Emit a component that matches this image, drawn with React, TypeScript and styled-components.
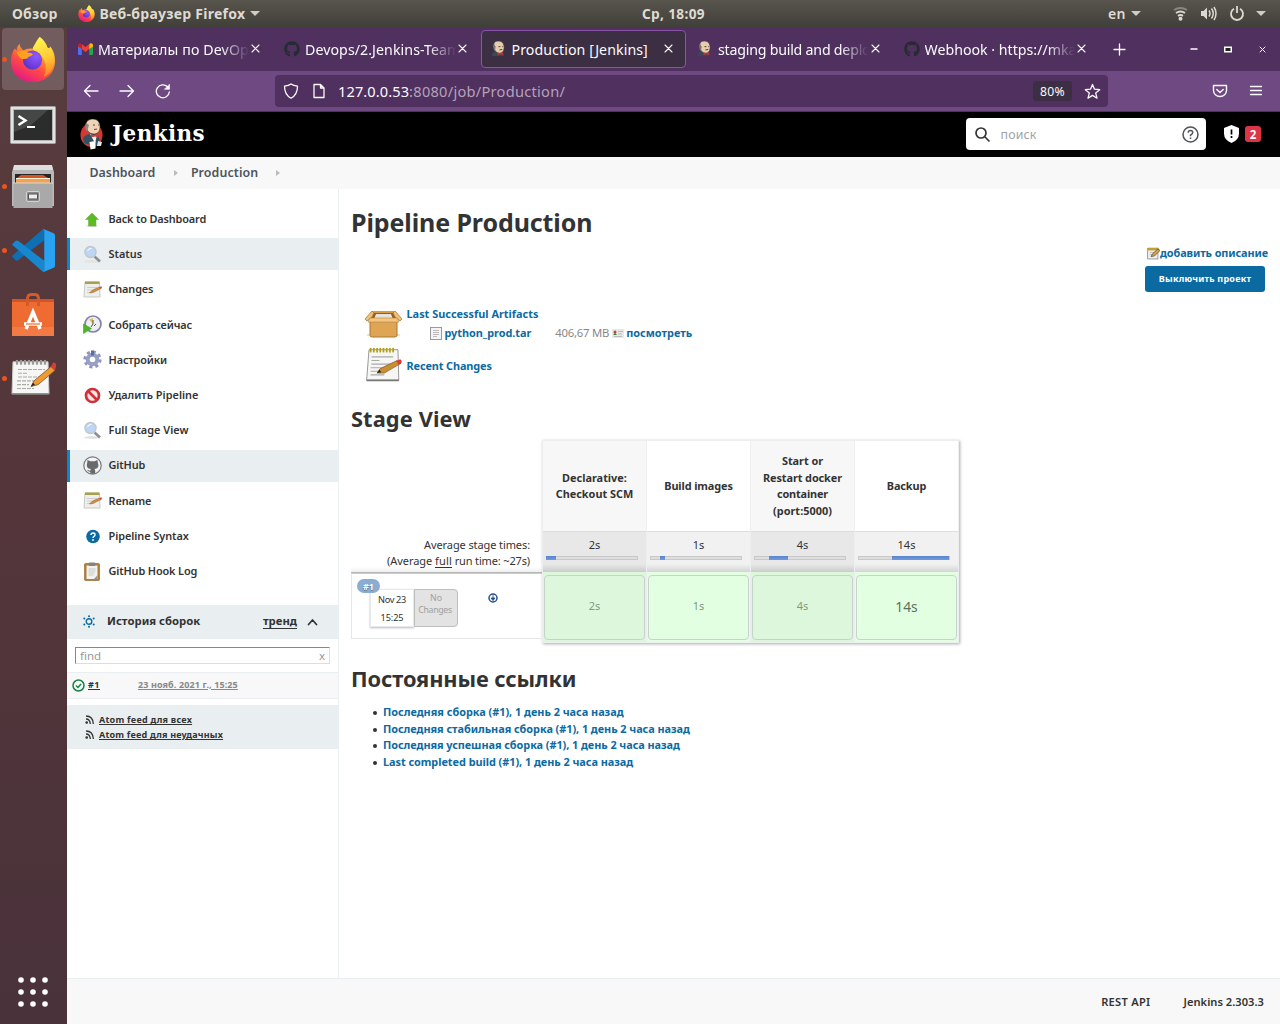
import React from 'react';
import styled, { createGlobalStyle, css } from 'styled-components';
import { FaGithub } from 'react-icons/fa';

/* letter spacing, in px, by label */
const tracking: Record<string, number> = {
  'Обзор': 0.22, 'Веб-браузер Firefox': 0.28, 'Ср, 18:09': 0.35, 'en': 0.44,
  'Материалы по DevOp': 0.12, 'Devops/2.Jenkins-Team': 0.06, 'Production [Jenkins]': 0.07, 'staging build and deplo': -0.22,
  '127.0.0.53': 0.09, ':8080/job/Production/': 0.27, '80%': 0.31, 'Jenkins': 0.39, 'поиск': 0.15, 'Production': 0.1,
  'Back to Dashboard': -0.15, 'Changes': -0.14, 'Собрать сейчас': -0.13, 'Настройки': -0.11, 'Удалить Pipeline': 0.02, 'Full Stage View': 0.02,
  'GitHub': -0.1, 'Rename': -0.12, 'GitHub Hook Log': -0.13, 'Pipeline Syntax': -0.05,
  'История сборок': -0.3, '#1': 0.5, '23 нояб. 2021 г., 15:25': 0.11, 'Atom feed для всех': 0.24, 'Atom feed для неудачных': 0.19,
  'Pipeline Production': -0.1, 'добавить описание': -0.11, 'Выключить проект': 0.22, 'Last Successful Artifacts': 0.01, 'python_prod.tar': -0.05, '406,67 MB': -0.21,
  'Recent Changes': -0.12, 'Stage View': 0.11,
  'Average stage times:': -0.1, '(Average ': -0.05, 'full': 0.18, ' run time: ~27s)': -0.15,
  'Build images': -0.11, 'Start or': -0.04, 'Restart docker': -0.09, 'container': -0.16, '(port:5000)': 0.03, 'Backup': -0.1,
  'Nov 23': -0.32, '15:25': -0.1, 'Changes ': -0.34,
  'Постоянные ссылки': -0.12, 'Последняя сборка (#1), 1 день 2 часа назад': -0.02, 'Последняя стабильная сборка (#1), 1 день 2 часа назад': -0.05,
  'Последняя успешная сборка (#1), 1 день 2 часа назад': -0.06, 'Last completed build (#1), 1 день 2 часа назад': -0.04,
  'REST API': 0.28, 'Jenkins 2.303.3': 0.04,
};

const Tracked = styled.span<{ $ls: number }>`
  white-space: pre;
  letter-spacing: ${p => p.$ls}px;
`;
const T = ({ children }: { children: string }) => <Tracked $ls={tracking[children] ?? 0}>{children}</Tracked>;

const Global = createGlobalStyle`
  * { box-sizing: border-box; }
  body { margin: 0; overflow: hidden; background: #fff; }
  svg { display: block; flex: none; }
  h1, h2, ul { margin: 0; padding: 0; }
`;

const Screen = styled.div`
  width: 1280px; height: 1024px; display: flex; flex-direction: column;
  font-family: 'Noto Sans', sans-serif; font-size: 11px; color: #333;
`;
const TopBar = styled.header`
  height: 27px; flex: none; display: grid; grid-template-columns: 642px 1fr auto; align-items: center;
  background: linear-gradient(#58554d, #403f39); color: #dfdbd2; font-size: 14px; font-weight: 700;
`;
const TopLeft = styled.div`display: flex; align-items: center; padding-left: 12px;`;
const AppMenu = styled.div`display: flex; align-items: center; gap: 5px; margin-left: 20px;`;
const TopRight = styled.div`display: flex; align-items: center; padding-right: 14px; font-weight: 600;`;
const Clock = styled.div`font-size: 13.6px; margin-top: -1px;`;
const Gap = styled.i<{ $w: number }>`width: ${p => p.$w}px; flex: none;`;
const Caret = styled.i`
  width: 0; height: 0; border: 5px solid transparent; border-top-color: #d0ccc3; border-bottom: 0;
`;

const Desktop = styled.div`display: flex; flex: 1; min-height: 0;`;
const Dock = styled.nav`
  width: 67px; flex: none; display: flex; flex-direction: column; align-items: flex-start;
  background: linear-gradient(#573c3e, #54363a 45%, #49323a);
`;
const DockItem = styled.div<{ $h: number; $running?: boolean }>`
  height: ${p => p.$h}px; width: 67px; display: flex; align-items: center; padding-left: 2px;
  &::before { content: ''; width: 5px; height: 5px; border-radius: 50%; z-index: 1; background: ${p => (p.$running ? '#e95420' : 'transparent')}; }
`;
const DockTile = styled.div<{ $active?: boolean }>`
  width: 62px; height: 62px; margin-left: -5px; border-radius: 4px; display: grid; place-items: center;
  background: ${p => (p.$active ? '#735c5e' : 'transparent')};
`;
const DockApps = styled.div`margin: auto 0 16px 17px;`;

const Browser = styled.div`flex: 1; min-width: 0; display: flex; flex-direction: column; background: #fff;`;
const TabStrip = styled.div`
  height: 44px; flex: none; display: flex; align-items: center; background: #50305f; color: #fbfbfe; font-size: 14.2px;
  padding-left: 1px;
`;
const Tab = styled.div<{ $active?: boolean; $gap?: number }>`
  width: 205px; margin-right: 1.5px; height: 38px; margin-top: -1px; padding: 0 12px 0 8.5px; display: flex; align-items: center; gap: ${p => p.$gap ?? 5}px;
  border: 1px solid ${p => (p.$active ? '#8a55a6' : 'transparent')}; border-radius: 4px;
  background: ${p => (p.$active ? '#3c2f43' : 'transparent')};
`;
const TabTitle = styled.div<{ $fade?: boolean }>`
  flex: 1; min-width: 0; overflow: hidden; display: flex; padding-top: 2px; margin-right: -3px;
  ${p => p.$fade && css`mask-image: linear-gradient(90deg, #000 calc(100% - 28px), transparent);`}
`;
const WindowButtons = styled.div`display: flex; align-items: center; gap: 26.5px; margin-left: auto; padding-right: 14.5px;`;
const NavBar = styled.div`
  height: 41px; flex: none; display: flex; align-items: center; background: #6f4a82; border-bottom: 1px solid #50305f; color: #fbfbfe;
  padding-left: 16px;
`;
const UrlBox = styled.div`
  width: 833px; height: 32px; border-radius: 4px; background: #50305f; display: flex; align-items: center; font-size: 14.6px;
  padding: 0 7px 0 8px;
`;
const UrlRest = styled.span`color: #b3a3bb;`;
const Zoom = styled.div`
  margin-left: auto; width: 39px; height: 20px; border-radius: 3px; background: #3c2f43; display: grid; place-items: center; font-size: 12.2px;
`;

const JHeader = styled.header`
  height: 45px; flex: none; background: #000; display: flex; align-items: center; padding: 0 19px 1px 13px; color: #fff;
`;
const Wordmark = styled.div`font: 700 21.5px/44px 'DejaVu Serif', serif; margin-left: 7px;`;
const Search = styled.div`
  margin-left: auto; width: 240px; height: 32px; border-radius: 4px; background: #fff; display: flex; align-items: center;
  padding: 0 7px 0 9px; font-size: 12.4px; color: #a0a4a8; justify-content: space-between;
`;
const SearchHint = styled.span`flex: 1; margin-left: 10.5px;`;
const Alert = styled.span`
  width: 16px; height: 16px; border-radius: 3px; background: #dc3545; display: grid; place-items: center; font-weight: 700; font-size: 11.5px; margin-left: 6px;
`;
const Crumbs = styled.div`
  height: 32px; flex: none; background: #f8f8f8; display: flex; align-items: center; padding: 0 0 2px 22.5px; font-size: 12.4px; font-weight: 600; color: #4d545d;
`;
const CrumbArrow = styled.i<{ $l: number; $r: number }>`
  border: 3px solid transparent; border-left: 4px solid #bbb; border-right: 0; margin: 2px ${p => p.$r}px 0 ${p => p.$l}px;
`;

const Body = styled.div`flex: 1; min-height: 0; display: flex;`;
const Side = styled.aside`width: 272px; flex: none; border-right: 1px solid #eaeff2;`;
const Tasks = styled.div`height: 416px; padding-top: 14px; display: flex; flex-direction: column; gap: 3.24px;`;
const Task = styled.a<{ $active?: boolean }>`
  height: 32px; flex: none; display: flex; align-items: center; gap: 6.5px; padding-left: 13px; font-size: 10.9px; font-weight: 600; color: #333;
  border-left: 3px solid ${p => (p.$active ? '#0b86d0' : 'transparent')}; background: ${p => (p.$active ? '#e9eef1' : 'transparent')};
  span { padding-bottom: 1.3px; }
`;
const HistoryHead = styled.div`
  height: 34px; background: #e9eef1; display: flex; align-items: center; padding: 0 20px 1px 16px; font-size: 11.3px; font-weight: 700;
  span { position: relative; top: -1px; }
`;
const HistoryTitle = styled.span`margin: 0 auto 0 12px;`;
const Trend = styled.a`text-decoration: underline; text-underline-offset: 2px; margin-right: 10px;`;
const Find = styled.div`
  margin: 8px 8px 8px; height: 17px; border: 1px solid #ddd; border-top-color: #888; border-left-color: #888; display: flex; align-items: center; justify-content: space-between;
  padding: 0 4px; font-size: 11.5px; color: #999;
`;
const BuildRow = styled.div`
  height: 27px; background: #f8f8f8; border: solid #e9eef1; border-width: 1px 0; display: flex; align-items: center; padding: 0 0 2px 4.5px;
  font-size: 9px; font-weight: 700;
  svg { margin-top: 1px; }
`;
const BuildNo = styled.a`text-decoration: underline; text-underline-offset: 1px; margin: -1px 38px 0 3.5px; color: #333;`;
const BuildDate = styled.a`text-decoration: underline; color: #888; text-underline-offset: 1px; margin-top: -1px;`;
const Feeds = styled.div`margin-top: 6px; height: 44px; background: #e9eef1; padding: 7px 18px; font-size: 9px; font-weight: 700;`;
const Feed = styled.div`height: 15px; display: flex; align-items: center; gap: 5px; a { text-decoration: underline; text-underline-offset: 1px; }`;

const Main = styled.main`flex: 1; min-width: 0; padding: 15px 12px 0; display: flex; flex-direction: column;`;
const H1 = styled.h1`font-size: 25px; line-height: 36px; font-weight: 700;`;
const H2 = styled.h2`font-size: 21.8px; line-height: 30px; font-weight: 700;`;
const Actions = styled.div`margin-top: 5px; display: flex; flex-direction: column; align-items: flex-end; gap: 5px;`;
const Link = styled.a<{ $drop?: number }>`
  color: #0b6aa2; font-weight: 700; font-size: 10.9px; line-height: 16px; display: inline-flex; align-items: center; padding-top: ${p => p.$drop ?? 0}px;
`;
const Disable = styled.button`
  width: 120px; height: 26px; margin-right: 3px; border: 0; border-radius: 3px; background: #0b6aa2; color: #fff; padding: 0 0 1px; font: 700 9px 'Noto Sans', sans-serif;
`;
const Artifacts = styled.div`margin: 14px 0 21px; padding-left: 14px; display: flex; flex-direction: column; gap: 5px;`;
const Artifact = styled.div`display: flex; gap: 4.5px; height: 36px; align-items: center;`;
const ArtifactLines = styled.div`display: flex; flex-direction: column; gap: 3px; align-self: flex-start;`;
const FileRow = styled.div`display: flex; align-items: center; padding-left: 23px; height: 16px;`;
const FileSize = styled.span`color: #888; font-size: 11.3px; margin: -1px 0 0 24px;`;

const Stage = styled.div`margin: 6px 0 21px; display: flex; height: 203px;`;
const StageLeft = styled.div`width: 191px; display: flex; flex-direction: column;`;
const AvgLabel = styled.div`
  height: 133px; display: flex; flex-direction: column; justify-content: flex-end; align-items: flex-end; padding: 0 12px 3px 0; font-size: 11px; line-height: 16px;
  background: linear-gradient(to top, #eee, transparent 5px);
  border-bottom: 1px solid #b8b8b8;
  u { text-underline-offset: 2px; }
`;
const RunInfo = styled.div`
  height: 66px; border: 1px solid #e4e6e8; border-top-color: #ccc; border-right: 0; display: flex; padding: 15px 0 0 18px; position: relative;
  svg { margin-top: 4px; }
`;
const Badge = styled.span`
  position: absolute; left: 5px; top: 5px; width: 23px; height: 14px; border-radius: 7px; background: #8aadd1; color: #fff; font-size: 9px; font-weight: 700; display: grid; place-items: center; text-shadow: 0 1px 1px #567;
`;
const RunDate = styled.div`
  width: 44px; height: 38px; border: 1px solid #e4eaee; box-shadow: 0 1px 2px #bbb; display: flex; flex-direction: column; align-items: center; font-size: 9.2px; line-height: 18px; padding-top: 1px; background: #fff;
`;
const NoChanges = styled.div`
  width: 44px; height: 38px; border: solid #bdbdbd; border-width: 1.500px 1px 1px 1px; border-radius: 0 4px 4px 0; background: #e3e3e3; color: #a0a0a0; font-size: 8.8px; line-height: 12px; padding-top: 2px;
  display: flex; flex-direction: column; align-items: center; margin-right: 30px;
`;
const StageGrid = styled.div`width: 417px; display: grid; grid-template-columns: 104px 104px 104px 103px; box-shadow: 1px 1px 3px #aaa; border: 1px solid #eceef0;`;
const StageCol = styled.div<{ $odd: boolean }>`
  display: flex; flex-direction: column; border-right: 1px solid #eceef0; background: ${p => (p.$odd ? '#f7f7f7' : '#fff')};
  &:last-child { border-right: 0; }
`;
const StageName = styled.div`
  height: 90px; display: flex; flex-direction: column; align-items: center; justify-content: center; font-size: 10.9px; font-weight: 700; line-height: 16.5px;
`;
const Avg = styled.div<{ $odd: boolean }>`
  height: 41px; border-top: 1px solid #ddd; display: flex; flex-direction: column; align-items: center; font-size: 11px; line-height: 16px; padding-top: 5px; gap: 3px;
  background: linear-gradient(to top, rgba(0,0,0,.12), transparent 8px), ${p => (p.$odd ? '#e8e8e8' : '#f1f1f1')};
`;
const Meter = styled.div`width: 92px; height: 4px; margin-right: 5px; border: 1px solid #c8c8c8; background: #dedede; display: flex;`;
const MeterFill = styled.i<{ $from: number; $w: number }>`height: 4px; margin: -1px 0 0 ${p => p.$from - 1}px; width: ${p => p.$w}px; background: linear-gradient(#5a85cc, #6f9bdf);`;
const CellWrap = styled.div<{ $odd: boolean }>`flex: 1; padding: 3px 1px 2px; background: ${p => (p.$odd ? '#ddf7dd' : '#e2ffe2')};`;
const Cell = styled.div<{ $last?: boolean }>`
  height: 100%; border: 1px solid #c6d3cb; border-radius: 4px; display: grid; place-items: center; padding-bottom: ${p => (p.$last ? 2 : 4)}px;
  color: ${p => (p.$last ? '#5d705d' : '#849784')}; font-size: ${p => (p.$last ? 13.8 : 11)}px;
`;
const Links = styled.ul`margin: 10px 0 0 22px; font-size: 10.9px; list-style: none;`;
const LinkItem = styled.li`
  height: 16.6px; display: flex; align-items: center; gap: 6px;
  &::before { content: ''; width: 4px; height: 4px; border-radius: 50%; background: #333; margin-top: 2px; }
`;
const Footer = styled.footer`
  height: 46px; flex: none; background: #f8f8f8; border-top: 1px solid #e9eef1; display: flex; align-items: center; justify-content: flex-end; gap: 33px; padding: 0 16px 0; font-size: 11.1px; font-weight: 600;
`;

const Firefox = ({ s }: { s: number }) => (
  <svg width={s} height={s} viewBox="0 0 48 48">
    <defs>
      <linearGradient id="ffb" x1=".8" y1="0" x2=".25" y2="1"><stop offset="0" stopColor="#fff44f" /><stop offset=".35" stopColor="#ffa02c" /><stop offset=".65" stopColor="#ff4a45" /><stop offset="1" stopColor="#e3158a" /></linearGradient>
      <linearGradient id="fft" x1=".5" y1="0" x2=".7" y2="1"><stop offset="0" stopColor="#fff44f" /><stop offset=".55" stopColor="#ffc832" /><stop offset="1" stopColor="#ff7a26" /></linearGradient>
      <radialGradient id="ffg" cx=".7" cy=".3" r=".9"><stop offset="0" stopColor="#9059ff" /><stop offset=".5" stopColor="#7542e5" /><stop offset="1" stopColor="#4f2fb4" /></radialGradient>
    </defs>
    <path d="M10 8c0 3 2 5 4 7 3-2 7-2 10-2 2-5 4-9 7-12 4 3 7 7 8 11 1 1 3 1 3-1 4 5 5 10 5 15 0 13-10 22-23 22S1 39 1 26c0-6 2-10 4-13 1 1 1 1 2 2 0-3 1-5 3-7z" fill="url(#ffb)" />
    <path d="M31 1c4 3 7 7 8 11 1 1 3 1 3-1 7 12 5 26-7 32 4-8 3-18-4-24-3-3-8-4-7-7 2-3 4-6 7-11z" fill="url(#fft)" />
    <circle cx="23.500" cy="25" r="10" fill="url(#ffg)" />
    <path d="M7 17c4-2 8-2 11 0 2 1 4 0 6 2-1 2-3 2-5 3 0 2-3 2-6 2-3-1-5-4-6-7z" fill="#ffa11f" />
  </svg>
);
const Terminal = () => (
  <svg width="46" height="38" viewBox="0 0 46 38"><rect x=".5" y=".5" width="45" height="37" rx="1" fill="#e2e2e2" stroke="#a5a5a5" /><rect x="3" y="3" width="40" height="32" fill="#b5b5b5" /><rect x="4" y="4" width="38" height="30" fill="#2b2d2c" /><path d="M4 4h34L20 20 4 26z" fill="#454746" /><path d="M8.500 10l7 4.500-7 4.500" fill="none" stroke="#fff" strokeWidth="2.400" /><path d="M17 21h8" stroke="#fff" strokeWidth="2" /></svg>
);
const Files = () => (
  <svg width="42" height="44" viewBox="0 0 42 44"><path d="M2 1h38l2 6v34H0V7z" fill="#b9b9b9" /><path d="M2 0h38l1 5H1z" fill="#dedede" /><rect x="3" y="9" width="36" height="9" fill="#262626" /><path d="M5 13l4-3h22l5 3v5H5z" fill="#d8551d" /><path d="M4 14h34v4H4z" fill="#f3a34f" /><path d="M4 13.500h34" stroke="#fff2dd" /><rect x="1.500" y="18" width="39" height="25" fill="#a9a9a9" /><path d="M1 18h40" stroke="#d8d8d8" /><rect x="14.500" y="26.500" width="13" height="10" rx="1.500" fill="#8a8a8a" stroke="#d3d3d3" /><rect x="16.500" y="29" width="9" height="5" fill="#eee" stroke="#555" /></svg>
);
const VSCode = () => (
  <svg width="43" height="43" viewBox="0 0 100 100"><path d="M1 65l7 7c2 2 5 2 7 0l60-46V2c-1-2-4-1-6 1L1 62c-1 1-1 2 0 3z" fill="#0f6fb4" /><path d="M1 35l7-7c2-2 5-2 7 0l60 46v24c-1 1-4 1-6-1L1 37c-1-1-1-1 0-2z" fill="#1787cf" /><path d="M69 98c3 2 5 2 7 1l21-9c2-1 3-3 3-5V15c0-2-1-4-3-5L76 1c-2-1-5-1-7 1 3-2 6 0 6 3v90c0 3-3 5-6 3z" fill="#27a3f1" /></svg>
);
const Software = () => (
  <svg width="42" height="44" viewBox="0 0 42 44"><path d="M0 6h42v37H0z" fill="#ee6b32" /><path d="M0 6h42v3H0z" fill="#cf5526" /><path d="M15.500 13V6q0-4.500 3.500-4.500h4q3.500 0 3.500 4.500v7" fill="none" stroke="#d55a29" strokeWidth="3" /><path d="M0 34h42v9H0z" fill="#f37a44" /><path d="M14 36l7-17 7 17M12 31h18" fill="none" stroke="#fff" strokeWidth="3.500" /><path d="M14 31h14" stroke="#ee6b32" strokeWidth="1.200" /></svg>
);
const Notes = ({ w, h, gold }: { w: number; h: number; gold?: boolean }) => (
  <svg width={w} height={h} viewBox="0 0 46 40" preserveAspectRatio="none"><path d={gold ? 'M5 3h36l1 34H2z' : 'M3 3h35l1 34H2z'} fill="#f6f6f4" stroke={gold ? '#888' : '#ccc'} /><path d={gold ? 'M2 36h40v2H2z' : 'M2 36h37v2H2z'} fill="#777" />
    {[7, 11, 15, 19, 23, 27, 31, 35].map(x => <path key={x} d={`M${x} 6V1`} stroke={gold ? '#b3a114' : '#999'} strokeWidth="2.200" />)}
    <path d="M8 11h27M8 15h10M8 19h25M7 23h19M7 27h12M7 31h17" stroke="#aaa" strokeWidth="1.200" strokeDasharray={gold ? undefined : '4 1'} />
    <path d={gold ? 'M15 29l4-5L40 15l3 4-19 10z' : 'M21 29l3-6L41 8l4 4-17 15z'} fill={gold ? '#c98f34' : '#f09a37'} stroke="#7e5520" strokeWidth=".8" />
    <path d={gold ? 'M39 15.500l4-1.500c3-.5 3 3 2 4l-3 2z' : 'M41 8l2-4c2-1 4 2 3 4l-1 4z'} fill="#dd3a3a" /><path d={gold ? 'M15 29l3-4 2 3z' : 'M21 29l2-4 2 2z'} fill="#222" /></svg>
);
const Head = ({ s }: { s: number }) => (
  <svg width={s} height={s} viewBox="0 0 16 16"><path d="M1 16c0-3 2-5 5-5l6 2 2 3z" fill="#36495a" /><path d="M3 4c0-3 2-4 5-4 4 0 6 3 6 7 0 4-2 6-5 6-4 0-6-4-6-9z" fill="#e6cdae" stroke="#4a3c32" strokeWidth=".7" /><path d="M3 3c-1 2-1 5 1 8l1-5z" fill="#777" /><path d="M8 6h2m2 0h1M9 9.500l3-.5" stroke="#3b2a24" strokeWidth=".9" /><path d="M7 12l3 1 3-1v3l-3-1-3 1z" fill="#c8372f" /></svg>
);
const Butler = () => (
  <svg width="25" height="31" viewBox="0 0 25 31"><ellipse cx="11.500" cy="16" rx="11" ry="12" fill="#d33833" /><path d="M3 19c2-3 5-4 8-4l7 1 3 10-8 1-9-3z" fill="#335061" /><path d="M10 15l4 2 3-1-2 8z" fill="#fff" /><path d="M6 6c0-4 3-6 7-6 5 0 7 4 7 8 0 5-3 7-6 7-5 0-8-4-8-9z" fill="#eed4b5" stroke="#3a2c24" strokeWidth=".6" /><path d="M6 4c-2 3 0 7 1 9l2-7z" fill="#888" /><path d="M13 6h2m3 0h1M14 10.500l3-.5" stroke="#3b2a24" strokeWidth=".8" /><path d="M11 15.500l3 1 4-1v3l-3-1-4 1z" fill="#d33833" /><path d="M9.500 23l6-1v7.500l-5 1z" fill="#fff" /><path d="M18 22l4 1-1 4-4 0z" fill="#dfe3e6" /></svg>
);
const Gmail = () => (
  <svg width="15" height="12" viewBox="0 0 16 12" preserveAspectRatio="none"><path d="M0 2v9q0 1 1 1h3V4z" fill="#4f6ff0" /><path d="M16 2v9q0 1-1 1h-3V4z" fill="#28a64b" /><path d="M4 1l4 3 4-3v5L8 9 4 6z" fill="#ea3f35" /><path d="M0 2.500Q0 0 2.500.2L4 1v5L0 3.500z" fill="#c5221f" /><path d="M16 2.500Q16 0 13.500.2L12 1v5l4-2.500z" fill="#fbbc04" /></svg>
);
const Stroke = ({ w, h = w, d, sw = 1.3, c = 'currentColor' }: { w: number; h?: number; d: string; sw?: number; c?: string }) => (
  <svg width={w} height={h} viewBox={`0 0 ${w} ${h}`} fill="none" stroke={c} strokeWidth={sw} strokeLinecap="round" strokeLinejoin="round"><path d={d} /></svg>
);
const Cross = () => <Stroke w={9} d="M1 1l7 7M8 1L1 8" sw={1.1} />;

const Magnifier = () => (
  <svg width="19" height="19" viewBox="0 0 19 19"><ellipse cx="9" cy="16.500" rx="8" ry="1.500" fill="#e3e3e3" /><path d="M11.500 11.500l5.500 5" stroke="#8f8f8f" strokeWidth="2.600" /><circle cx="7.500" cy="7" r="5.500" fill="#bcd6f4" stroke="#c3c8cf" strokeWidth="1.500" /><path d="M4.500 6q1-3 4-2.500" stroke="#fff" fill="none" /></svg>
);
const Edit = () => (
  <svg width="19" height="19" viewBox="0 0 19 19"><path d="M2 2h14.500l.5 15H1z" fill="#eeeeec" stroke="#c8c8c4" /><path d="M2 1.500h14.500V4H2z" fill="#a9a04c" /><path d="M4 7.500h10M4 10h5M4 12.500h3" stroke="#cfcfcf" /><path d="M6.500 13l3-3 7-3 1.500 1.500-8 4z" fill="#d3913c" stroke="#8b5a24" strokeWidth=".5" /><path d="M16.500 7l2-.7.3 1.700-1 .7z" fill="#d33" /></svg>
);
const icons: Record<string, React.ReactNode> = {
  up: <svg width="19" height="19" viewBox="0 0 19 19"><ellipse cx="9" cy="16" rx="6" ry="1.200" fill="#ddd" /><path d="M9 3l6.500 6.500H13V16H5.500V9.500H2.500z" fill="#5cba22" stroke="#6fae4a" strokeWidth=".6" /></svg>,
  mag: <Magnifier />, edit: <Edit />,
  build: <svg width="19" height="19" viewBox="0 0 19 19"><circle cx="10" cy="9" r="8" fill="#eceef2" stroke="#8184a6" strokeWidth="1.700" /><path d="M10 9L6 4.500 10 3z" fill="#e5c14b" /><path d="M10 5v4l-2 3M13 9l-2 2" stroke="#555" fill="none" /><path d="M.5 9l8 4.500-8 5z" fill="#4fb52a" stroke="#3d9020" strokeWidth=".5" /></svg>,
  gear: <svg width="19" height="19" viewBox="0 0 19 19"><circle cx="9.500" cy="9.500" r="7.600" fill="none" stroke="#8d94bd" strokeWidth="3" strokeDasharray="3 2.970" /><circle cx="9.500" cy="9.500" r="4.800" fill="none" stroke="#989fc6" strokeWidth="4" /><path d="M9.500 .5v5" stroke="#5571a5" strokeWidth="3" /></svg>,
  no: <svg width="19" height="19" viewBox="0 0 19 19"><circle cx="9.500" cy="9.500" r="6.500" fill="#f4e4e4" stroke="#d23038" strokeWidth="2.700" /><path d="M5 5l9 9" stroke="#d23038" strokeWidth="2.700" /></svg>,
  git: <svg width="19" height="19" viewBox="0 0 19 19"><circle cx="9.500" cy="9.500" r="8.700" fill="#f3f4f5" stroke="#777" strokeWidth="1.200" /><path d="M4.500 4l3 1.200h4L14.500 4l.4 3c1.600 4-.5 5.700-3.400 6 1 1 .7 3 .7 4.800H7.300v-2c-2 .3-2.300-1-3.300-2 1.500-.2 1.600 1.200 3.300.8 0-.8.2-1.200.6-1.600C4.500 12.700 3 10.500 4.200 7z" fill="#686a6c" /></svg>,
  help: <svg width="19" height="19" viewBox="0 0 19 19"><circle cx="10" cy="9.500" r="6.800" fill="#0b6aa2" /><path d="M8 8q0-2 2-2t2 1.700q0 1-1 1.600T10 11" fill="none" stroke="#fff" strokeWidth="1.400" /><circle cx="10" cy="13" r=".9" fill="#fff" /></svg>,
  clip: <svg width="19" height="19" viewBox="0 0 19 19"><rect x="1.500" y="1.500" width="15" height="17" rx="1" fill="#b37b35" stroke="#8e6026" strokeWidth=".6" /><rect x="3.500" y="3.500" width="11" height="13.500" fill="#f2f2f0" /><rect x="5.500" y=".5" width="7" height="3.500" rx="1" fill="#85857f" /><path d="M5.500 7h7M5.500 9h7M5.500 11h6M5.500 13h5" stroke="#c8c8c8" /><path d="M11 17l3.500-4v4z" fill="#999" /></svg>,
};
const tasks: [string, string, boolean?][] = [
  ['up', 'Back to Dashboard'], ['mag', 'Status', true], ['edit', 'Changes'], ['build', 'Собрать сейчас'], ['gear', 'Настройки'], ['no', 'Удалить Pipeline'],
  ['mag', 'Full Stage View'], ['git', 'GitHub', true], ['edit', 'Rename'], ['help', 'Pipeline Syntax'], ['clip', 'GitHub Hook Log'],
];
const stages = [
  { name: ['Declarative:', 'Checkout SCM'], time: '2s', from: 0, w: 10 },
  { name: ['Build images'], time: '1s', from: 10, w: 5 },
  { name: ['Start or', 'Restart docker', 'container', '(port:5000)'], time: '4s', from: 15, w: 19 },
  { name: ['Backup'], time: '14s', from: 34, w: 57 },
];
const permalinks = [
  'Последняя сборка (#1), 1 день 2 часа назад',
  'Последняя стабильная сборка (#1), 1 день 2 часа назад',
  'Последняя успешная сборка (#1), 1 день 2 часа назад',
  'Last completed build (#1), 1 день 2 часа назад',
];
const Rss = () => <svg width="9" height="9" viewBox="0 0 9 9" fill="none" stroke="#333" strokeWidth="1.300"><path d="M1 1q7 0 7.300 8M1 4q4 0 4.300 5" /><circle cx="1.700" cy="7.500" r=".7" /></svg>;

export default function App() {
  return (
    <Screen>
      <Global />
      <TopBar>
        <TopLeft><T>Обзор</T><AppMenu><Firefox s={17} /><T>Веб-браузер Firefox</T><Caret /></AppMenu></TopLeft>
        <Clock><T>Ср, 18:09</T></Clock>
        <TopRight>
          <T>en</T><Gap $w={5} /><Caret /><Gap $w={32} />
          <svg width="15" height="15" viewBox="0 0 15 15" fill="none" strokeWidth="2"><path d="M1 4q6.500-4 13 0" stroke="#8a877f" /><path d="M3 7q4.500-3 9 0" stroke="#ddd9d0" /><path d="M5 9.800q2.500-1.600 5 0" stroke="#ddd9d0" /><circle cx="7.500" cy="12.800" r="1" stroke="#ddd9d0" /></svg>
          <Gap $w={12} />
          <svg width="17" height="15" viewBox="0 0 17 15" fill="none" stroke="#ddd9d0" strokeWidth="1.500"><path d="M1 5h2.500L7 1.500v12L3.500 10H1z" fill="#ddd9d0" stroke="none" /><path d="M9 4.500q2 3 0 6M11.500 2.500q3.500 5 0 10M14 1q4 6.500 0 13" /></svg>
          <Gap $w={12} />
          <svg width="16" height="16" viewBox="0 0 16 16" fill="none" stroke="#ddd9d0" strokeWidth="1.800"><path d="M5 2.800a6 6 0 1 0 6 0M8 0v7" /></svg>
          <Gap $w={11} /><Caret />
        </TopRight>
      </TopBar>
      <Desktop>
        <Dock>
          <DockItem $h={64} $running><DockTile $active><Firefox s={46} /></DockTile></DockItem>
          <DockItem $h={67}><DockTile><Terminal /></DockTile></DockItem>
          <DockItem $h={57} $running><DockTile><Files /></DockTile></DockItem>
          <DockItem $h={70} $running><DockTile><VSCode /></DockTile></DockItem>
          <DockItem $h={60}><DockTile><Software /></DockTile></DockItem>
          <DockItem $h={66} $running><DockTile><Notes w={46} h={38} /></DockTile></DockItem>
          <DockApps><svg width="32" height="32" viewBox="0 0 32 32" fill="#fff">{[4, 16, 28].map(x => [4, 16, 28].map(y => <circle key={`${x}-${y}`} cx={x} cy={y} r="2.800" />))}</svg></DockApps>
        </Dock>
        <Browser>
          <TabStrip>
            <Tab $gap={5.5}><Gmail /><TabTitle $fade><T>Материалы по DevOp</T></TabTitle><Cross /></Tab>
            <Tab><FaGithub size={16} color="#262a33" /><TabTitle $fade><T>Devops/2.Jenkins-Team</T></TabTitle><Cross /></Tab>
            <Tab $active $gap={6}><Head s={15} /><TabTitle><T>Production [Jenkins]</T></TabTitle><Cross /></Tab>
            <Tab $gap={6}><Head s={15} /><TabTitle $fade><T>staging build and deplo</T></TabTitle><Cross /></Tab>
            <Tab><FaGithub size={16} color="#262a33" /><TabTitle $fade><T>Webhook · https://mka</T></TabTitle><Cross /></Tab>
            <Gap $w={12} /><Stroke w={13} d="M6.500 1v11M1 6.500h11" />
            <WindowButtons>
              <Stroke w={8} d="M1 4h6" sw={1.500} />
              <svg width="8" height="7"><rect x=".75" y="1.250" width="6.500" height="4.500" fill="#222" stroke="#fff" strokeWidth="1.500" /></svg>
              <Stroke w={7} d="M1 1l5 5M6 1L1 6" sw={1} />
            </WindowButtons>
          </TabStrip>
          <NavBar>
            <Stroke w={16} d="M15 8H1.500M7 2.500L1.500 8 7 13.500" /><Gap $w={20} />
            <Stroke w={16} d="M1 8h13.500M9 2.500L14.500 8 9 13.500" /><Gap $w={20} />
            <svg width="16" height="16" viewBox="0 0 16 16" fill="none" stroke="#fbfbfe" strokeWidth="1.300" strokeLinecap="round"><path d="M14.300 9A6.500 6.500 0 1 1 12.500 3.800" /><path d="M14.500 1.500v4.800H9.700z" fill="#fbfbfe" strokeWidth=".6" /></svg>
            <Gap $w={104} />
            <UrlBox>
              <Stroke w={16} d="M8 1C6 2.500 3.500 3 1.500 3.200c0 5 1 9 6.500 12 5.500-3 6.500-7 6.500-12C12.500 3 10 2.500 8 1z" /><Gap $w={13} />
              <Stroke w={14} h={16} d="M2 1.500h6.500L12 5v9.500H2zM8.500 1.500V5H12" /><Gap $w={12} />
              <T>127.0.0.53</T><UrlRest><T>:8080/job/Production/</T></UrlRest>
              <Zoom><T>80%</T></Zoom><Gap $w={12} />
              <Stroke w={17} d="M8.500 1.500l2 4.700 5.200.5-4 3.400 1.300 5.100-4.500-2.800L4 15.200l1.300-5.100-4-3.400 5.200-.5z" />
            </UrlBox>
            <Gap $w={104} /><Stroke w={16} d="M1.500 2.500h13v5a6.500 6 0 0 1-13 0zM4.800 6.500L8 9.500l3.200-3" sw={1.400} />
            <Gap $w={21} /><Stroke w={14} d="M1.500 2.500h11M1.500 6.500h11M1.500 10.500h11" />
          </NavBar>
          <JHeader>
            <Butler /><Wordmark><T>Jenkins</T></Wordmark>
            <Search>
              <Stroke w={15} d="M10 10l4 4M11 6A5 5 0 1 1 1 6a5 5 0 0 1 10 0z" sw={1.700} c="#333" /><SearchHint><T>поиск</T></SearchHint>
              <svg width="17" height="17" viewBox="0 0 17 17" fill="none" stroke="#4d545d" strokeWidth="1.500"><circle cx="8.500" cy="8.500" r="7.500" /><path d="M6.200 6.800Q6.300 4.600 8.500 4.600t2.200 2Q10.700 8 8.500 9.200v1M8.500 11.500V13" /></svg>
            </Search>
            <Gap $w={18} />
            <svg width="15" height="18" viewBox="0 0 15 18"><path d="M7.500 0L15 3v5.500q0 6.500-7.500 9.500Q0 15 0 8.500V3z" fill="#fff" /><path d="M7.500 4.500v5M7.500 11v2" stroke="#000" strokeWidth="1.700" /></svg>
            <Alert>2</Alert>
          </JHeader>
          <Crumbs><T>Dashboard</T><CrumbArrow $l={19} $r={12.5} /><T>Production</T><CrumbArrow $l={18} $r={0} /></Crumbs>
          <Body>
            <Side>
              <Tasks>{tasks.map(([i, t, a]) => <Task key={t} $active={a}>{icons[i]}<T>{t}</T></Task>)}</Tasks>
              <HistoryHead>
                <svg width="12" height="13" viewBox="0 0 12 13" fill="#0b6aa2"><circle cx="6" cy="6.500" r="2.800" fill="none" stroke="#0b6aa2" strokeWidth="1.400" /><circle cx="6" cy="1.200" r="1" /><circle cx="6" cy="11.800" r="1" /><circle cx="1.300" cy="3.500" r="1" /><circle cx="10.700" cy="3.500" r="1" /><circle cx="1.300" cy="9.500" r="1" /><circle cx="10.700" cy="9.500" r="1" /></svg>
                <HistoryTitle>История сборок</HistoryTitle><Trend><T>тренд</T></Trend><Stroke w={11} h={8} d="M1.500 6.500l4-4.500 4 4.500" sw={1.700} />
              </HistoryHead>
              <Find><T>find</T><span>x</span></Find>
              <BuildRow>
                <svg width="13" height="13" viewBox="0 0 13 13" fill="none" stroke="#138347" strokeWidth="1.500"><circle cx="6.500" cy="6.500" r="5.500" /><path d="M4 6.500l2 2 3-3.500" /></svg>
                <BuildNo><T>#1</T></BuildNo><BuildDate><T>23 нояб. 2021 г., 15:25</T></BuildDate>
              </BuildRow>
              <Feeds><Feed><Rss /><a><T>Atom feed для всех</T></a></Feed><Feed><Rss /><a><T>Atom feed для неудачных</T></a></Feed></Feeds>
            </Side>
            <Main>
              <H1><T>Pipeline Production</T></H1>
              <Actions>
                <Link><svg width="13" height="13" viewBox="0 0 19 19"><rect x="1" y="2" width="15" height="15.500" fill="#eee" stroke="#777" /><path d="M1 1h16v4H1z" fill="#c2a133" /><path d="M4 8h8M4 11h4" stroke="#aaa" /><path d="M6 14l2-4 8-7 3 2-8 8z" fill="#e0a444" stroke="#444" /></svg><T>добавить описание</T></Link>
                <Disable><T>Выключить проект</T></Disable>
              </Actions>
              <Artifacts>
                <Artifact>
                  <svg width="37" height="30" viewBox="0 0 37 30"><ellipse cx="18.500" cy="26" rx="17" ry="2" fill="#ddd" /><path d="M7 3h23l3 7H4z" fill="#8f5e22" /><path d="M11 5h15l2 5H9z" fill="#e6e2da" /><path d="M7 2h23l-2 2H9z" fill="#d69b49" /><path d="M5 11h27v15q0 2-2 2H7q-2 0-2-2z" fill="#dea654" stroke="#b0762c" /><path d="M7 2L0 10l2 2 5-4 2-4zM30 2l7 8-2 2-5-4-2-4z" fill="#eec07a" stroke="#a96f2a" strokeWidth=".7" /><path d="M5 9h27l2 4H3z" fill="#f2c685" stroke="#b98238" strokeWidth=".6" /></svg>
                  <ArtifactLines>
                    <Link><T>Last Successful Artifacts</T></Link>
                    <FileRow>
                      <svg width="13" height="13" viewBox="0 0 13 13"><rect x=".5" y=".5" width="11" height="12" fill="#f4f4f4" stroke="#999" /><path d="M3 3.500h6M3 5.500h6M3 7.500h6M3 9.500h4" stroke="#bbb" /></svg>
                      <Gap $w={2} /><Link><T>python_prod.tar</T></Link><FileSize><T>406,67 MB</T></FileSize><Gap $w={3} />
                      <svg width="12" height="9" viewBox="0 0 12 9"><rect width="12" height="9" fill="#e8e8e8" /><circle cx="3" cy="3" r="1.500" fill="#b14a34" /><path d="M1 6l2-2 2 2z" fill="#3c7a35" /><path d="M6 2.500h5M6 5h4M2 7.500h8" stroke="#bbb" /></svg>
                      <Gap $w={2} /><Link><T>посмотреть</T></Link>
                    </FileRow>
                  </ArtifactLines>
                </Artifact>
                <Artifact><Notes w={37} h={36} gold /><Link $drop={2}><T>Recent Changes</T></Link></Artifact>
              </Artifacts>
              <H2><T>Stage View</T></H2>
              <Stage>
                <StageLeft>
                  <AvgLabel><T>Average stage times:</T><span><T>{'(Average '}</T><u><T>full</T></u><T>{' run time: ~27s)'}</T></span></AvgLabel>
                  <RunInfo>
                    <Badge>#1</Badge>
                    <RunDate><T>Nov 23</T><T>15:25</T></RunDate>
                    <NoChanges><T>No</T><T>{'Changes '}</T></NoChanges>
                    <svg width="10" height="10" viewBox="0 0 10 10"><circle cx="5" cy="5" r="4" fill="#fff" stroke="#27508f" strokeWidth="1.500" /><path d="M5 2v3M3 5h4L5 7.500z" stroke="#27508f" fill="#27508f" strokeWidth=".9" /></svg>
                  </RunInfo>
                </StageLeft>
                <StageGrid>
                  {stages.map((s, i) => (
                    <StageCol key={s.time} $odd={i % 2 === 0}>
                      <StageName>{s.name.map(n => <T key={n}>{n}</T>)}</StageName>
                      <Avg $odd={i % 2 === 0}><T>{s.time}</T><Meter><MeterFill $from={s.from} $w={s.w} /></Meter></Avg>
                      <CellWrap $odd={i % 2 === 0}><Cell $last={i === 3}>{s.time}</Cell></CellWrap>
                    </StageCol>
                  ))}
                </StageGrid>
              </Stage>
              <H2><T>Постоянные ссылки</T></H2>
              <Links>
                {permalinks.map(t => <LinkItem key={t}><Link><T>{t}</T></Link></LinkItem>)}
              </Links>
            </Main>
          </Body>
          <Footer><T>REST API</T><T>Jenkins 2.303.3</T></Footer>
        </Browser>
      </Desktop>
    </Screen>
  );
}
